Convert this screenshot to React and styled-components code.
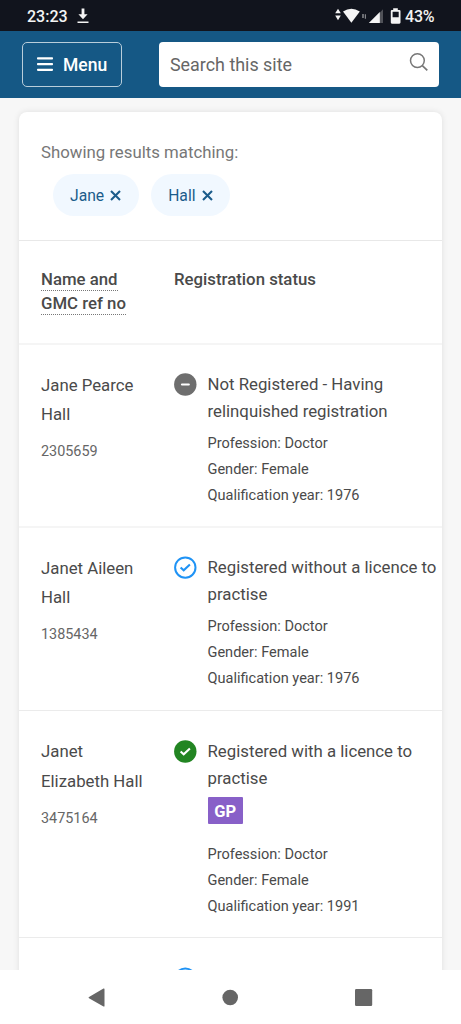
import React from 'react'
import styled, { createGlobalStyle } from 'styled-components'

const GlobalStyle = createGlobalStyle`
 * {
  box-sizing: border-box;
 }

 body {
  margin: 0;
  background-color: #f7f7f7;
  font-family: Roboto, "Liberation Sans", sans-serif;
  color: #4a4a4a;
 }
`

const Screen = styled.div`
 display: flex;
 flex-direction: column;
 width: 461px;
 height: 1024px;
 overflow: hidden;
`

const StatusBar = styled.div`
 display: flex;
 justify-content: space-between;
 align-items: center;
 flex: none;
 height: 31px;
 padding: 1px 27px 0;
 background-color: #11141d;
 color: #f4f4f4;
 font-size: 16px;
 font-weight: 500;
`

const StatusGroup = styled.div`
 display: flex;
 align-items: center;
`

const Clock = styled.span`
 width: 50px;
 white-space: nowrap;
`

const Battery = styled.span`
 width: 29px;
 margin-left: 4px;
 white-space: nowrap;
 letter-spacing: -0.2px;
`

const Header = styled.header`
 display: flex;
 justify-content: space-between;
 flex: none;
 height: 67px;
 padding: 11px 22.5px 0 22px;
 background-color: #155885;
`

const MenuButton = styled.button`
 display: flex;
 align-items: center;
 gap: 10px;
 width: 100px;
 height: 45px;
 padding: 0 0 0 14px;
 border: 1px solid #b9cedb;
 border-radius: 5px;
 background: none;
 color: #fff;
 font-family: inherit;
 font-size: 17.5px;
 font-weight: 500;
`

const SearchBox = styled.div`
 display: flex;
 justify-content: space-between;
 width: 280px;
 height: 45px;
 padding: 0 10px 0 11.5px;
 border-radius: 4px;
 background-color: #fff;
 color: #666;
 font-size: 17.9px;
 line-height: 46px;

 svg {
  margin-top: 10px;
 }
`

const Main = styled.main`
 flex: 1;
 min-height: 0;
 overflow: hidden;
 padding: 14px 19px 0;
`

const Card = styled.section`
 width: 423px;
 height: 900px;
 border-radius: 8px 8px 0 0;
 background-color: #fff;
 box-shadow: 0 0 6px rgba(0, 0, 0, 0.1);
`

const Filters = styled.div`
 height: 129px;
 padding: 27px 22px 0;
 border-bottom: 1px solid #e8e8e8;
`

const FilterLabel = styled.p`
 margin: 0;
 color: #777;
 font-size: 16.8px;
 line-height: 26px;
`

const Chips = styled.div`
 display: flex;
 gap: 12px;
 padding: 9px 0 0 11.5px;
`

const Chip = styled.span`
 display: flex;
 align-items: center;
 gap: 6px;
 height: 42px;
 padding: 0 17.5px;
 border-radius: 21px;
 background-color: #f1f8ff;
 color: #1b5c8b;
 font-size: 15.7px;
`

const TableHead = styled.div`
 display: flex;
 height: 104px;
 padding: 26px 0 0 22px;
 border-bottom: 2px solid #f5f5f5;
 font-size: 16.8px;
 font-weight: 500;
 line-height: 24px;
`

const HeadName = styled.div`
 width: 133px;
`

const Sortable = styled.span`
 padding-bottom: 0.5px;
 border-bottom: 1px dotted #777;
`

const Row = styled.article`
 display: flex;
 height: ${(props) => props.$height}px;
 padding: ${(props) => props.$top || 26}px 0 0 22px;
 border-bottom: ${(props) => (props.$soft ? '2px solid #f5f5f5' : '1px solid #ebebeb')};
`

const NameColumn = styled.div`
 flex: none;
 width: 133px;
 margin-top: -0.4px;
 font-size: 16.8px;
 line-height: 29.4px;
`

const RefNumber = styled.div`
 margin-top: 7.7px;
 color: #666;
 font-size: 14.4px;
`

const IconColumn = styled.div`
 flex: none;
 width: 33.5px;
 padding-top: 2px;
`

const StatusColumn = styled.div`
 flex: 1;
`

const StatusText = styled.div`
 font-size: 16.8px;
 line-height: 27px;
 white-space: nowrap;
`

const Badge = styled.span`
 display: block;
 width: 35.5px;
 height: 27px;
 margin: 5.6px 0 11.5px;
 border-radius: 1px;
 background-color: #8860c8;
 color: #fff;
 font-size: 16.5px;
 font-weight: 700;
 line-height: 30px;
 text-align: center;
`

const Details = styled.div`
 padding-top: 6px;
 font-size: 14.55px;
 line-height: 26.2px;
`

const NavBar = styled.nav`
 display: flex;
 justify-content: space-between;
 flex: none;
 height: 54px;
 padding: 18px 88px 0;
 background-color: #fff;
`

function StatusIcon({ type }) {
 const color = { none: '#6e6e6e', outline: '#1f93f5', full: '#228522' }[type]
 return (
  <svg width="23" height="23" viewBox="0 0 23 23" fill="none" display="block">
   {type === 'outline' ? (
    <circle cx="11.3" cy="11.6" r="10.2" stroke={color} strokeWidth="2" />
   ) : (
    <circle cx="11.3" cy="11.5" r="11.2" fill={color} />
   )}
   {type === 'none' ? (
    <path d="M8 11.5h6.8" stroke="#fff" strokeWidth="2.2" strokeLinecap="round" />
   ) : (
    <path
     d="M6.6 11.5l3.1 2.8 6.2-5.7"
     stroke={type === 'outline' ? color : '#fff'}
     strokeWidth="2.1"
    />
   )}
  </svg>
 )
}

function Cross() {
 return (
  <svg width="11" height="11" viewBox="0 0 11 11" display="block">
   <path d="M1 1l9 9M10 1l-9 9" stroke="#1b5c8b" strokeWidth="2.1" />
  </svg>
 )
}

// download arrow next to the clock
function DownloadIcon() {
 return (
  <svg width="12" height="16" viewBox="0 0 12 16" fill="#f4f4f4">
   <path d="M4.6.4h2.8v5.8h3.2L6 11.2 1.4 6.2h3.2zM.5 13.6h11v1.5H.5z" />
  </svg>
 )
}

// wifi, mobile signal and battery
function SignalIcons() {
 return (
  <svg width="66" height="18" viewBox="335 6 66 18" fill="#f4f4f4" display="block">
   <path d="M338 7.8l2.8 4.4h-5.6zM338 19.2l2.8-4.6h-5.6z" />
   <path d="M343 10.4q8.4-5.4 16.8 0L351.4 21.8z" />
   <path d="M362.2 13h1.6v4h-1.6zM364.8 13.2h1.2v4.5h-1.2z" opacity="0.5" />
   <path d="M383 8.2V22h-4V12.4z" opacity="0.28" />
   <path d="M379.8 11V22h-11z" />
   <path
    fillRule="evenodd"
    d="M393.2 7.3h4.6v1.6h1.5q1.2 0 1.2 1.2v11.5q0 1.1-1.2 1.1h-7.4q-1.1 0-1.1-1.1V10.1q0-1.2 1.1-1.2h1.3zM392.6 10.8v5.4h6.1v-5.4z"
   />
  </svg>
 )
}

const doctors = [
 {
  name: ['Jane Pearce', 'Hall'],
  ref: '2305659',
  icon: 'none',
  status: ['Not Registered - Having', 'relinquished registration'],
  year: 1976,
  height: 183,
  soft: true,
 },
 {
  name: ['Janet Aileen', 'Hall'],
  ref: '1385434',
  icon: 'outline',
  status: ['Registered without a licence to', 'practise'],
  year: 1976,
  height: 183,
 },
 {
  name: ['Janet', 'Elizabeth Hall'],
  ref: '3475164',
  icon: 'full',
  status: ['Registered with a licence to', 'practise'],
  badge: 'GP',
  year: 1991,
  height: 227,
  top: 26.5,
 },
]

function DoctorRow({ doctor }) {
 return (
  <Row $height={doctor.height} $top={doctor.top} $soft={doctor.soft}>
   <NameColumn>
    {doctor.name.map((line) => (
     <div key={line}>{line}</div>
    ))}
    <RefNumber>{doctor.ref}</RefNumber>
   </NameColumn>
   <IconColumn>
    <StatusIcon type={doctor.icon} />
   </IconColumn>
   <StatusColumn>
    {doctor.status.map((line) => (
     <StatusText key={line}>{line}</StatusText>
    ))}
    {doctor.badge && <Badge>{doctor.badge}</Badge>}
    <Details>
     <div>Profession: Doctor</div>
     <div>Gender: Female</div>
     <div>Qualification year: {doctor.year}</div>
    </Details>
   </StatusColumn>
  </Row>
 )
}

function App() {
 return (
  <Screen>
   <GlobalStyle />
   <StatusBar>
    <StatusGroup>
     <Clock>23:23</Clock>
     <DownloadIcon />
    </StatusGroup>
    <StatusGroup>
     <SignalIcons />
     <Battery>43%</Battery>
    </StatusGroup>
   </StatusBar>

   <Header>
    <MenuButton>
     <svg width="16" height="15" viewBox="0 0 16 15" fill="#fff">
      <rect y="0.3" width="16" height="2.2" rx="0.8" />
      <rect y="6" width="16" height="2.2" rx="0.8" />
      <rect y="11.7" width="16" height="2.2" rx="0.8" />
     </svg>
     Menu
    </MenuButton>
    <SearchBox>
     Search this site
     <svg width="20" height="20" viewBox="0 0 20 20" fill="none">
      <circle cx="8.4" cy="8.6" r="6.9" stroke="#777" strokeWidth="1.5" />
      <path d="M13.3 13.6l5 4.8" stroke="#777" strokeWidth="1.7" />
     </svg>
    </SearchBox>
   </Header>

   <Main>
    <Card>
     <Filters>
      <FilterLabel>Showing results matching:</FilterLabel>
      <Chips>
       <Chip>
        Jane <Cross />
       </Chip>
       <Chip>
        Hall <Cross />
       </Chip>
      </Chips>
     </Filters>
     <TableHead>
      <HeadName>
       <Sortable>Name and</Sortable>
       <br />
       <Sortable>GMC ref no</Sortable>
      </HeadName>
      <div>Registration status</div>
     </TableHead>
     {doctors.map((doctor) => (
      <DoctorRow key={doctor.ref} doctor={doctor} />
     ))}
     <Row $height={183} $top={27}>
      <NameColumn />
      <IconColumn>
       <StatusIcon type="outline" />
      </IconColumn>
     </Row>
    </Card>
   </Main>

   <NavBar>
    <svg width="17" height="20" viewBox="0 0 17 20" fill="#666">
     <path d="M15.5.6q1-.5 1 .6v16.7q0 1.1-1 .5L1 10.2q-1-.6 0-1.2z" />
    </svg>
    <svg width="16" height="20" viewBox="0 0 16 20" fill="#666">
     <circle cx="8.2" cy="9.5" r="7.8" />
    </svg>
    <svg width="18" height="20" viewBox="0 0 18 20" fill="#666">
     <rect x="0" y="1" width="17.2" height="17" rx="1.2" />
    </svg>
   </NavBar>
  </Screen>
 )
}

export default App
